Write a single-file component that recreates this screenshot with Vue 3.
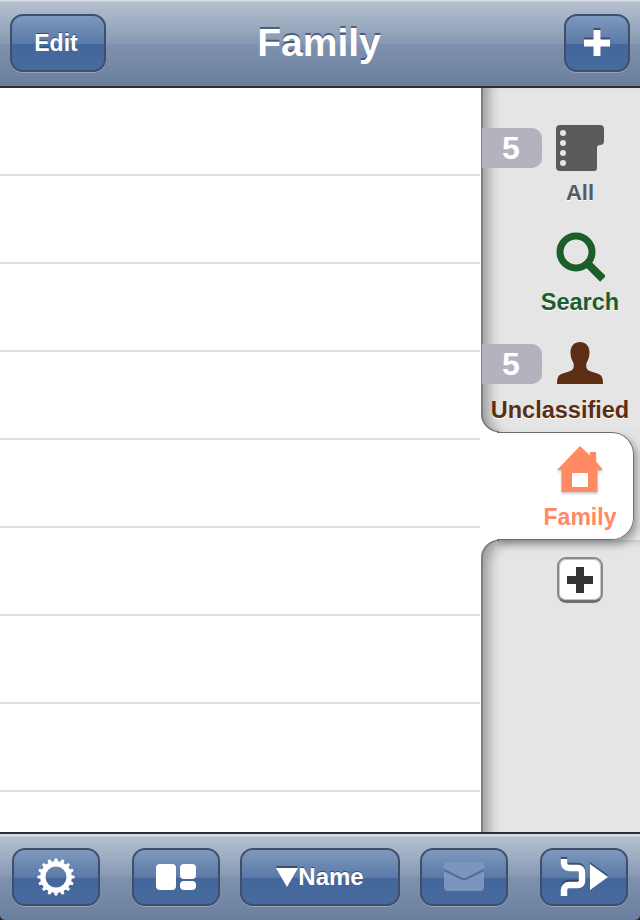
<script setup>
// gear outline for the settings button, hole cut with evenodd
const gearPath = (() => {
  const teeth = 16
  const cx = 20
  const cy = 20
  const step = (Math.PI * 2) / teeth
  let d = ''
  for (let i = 0; i < teeth; i++) {
    const a = i * step
    const pts = [
      [15.8, a - step * 0.5],
      [15.8, a - step * 0.3],
      [18.6, a - step * 0.18],
      [18.6, a + step * 0.18],
      [15.8, a + step * 0.3]
    ]
    for (const [r, t] of pts) {
      const x = (cx + r * Math.cos(t)).toFixed(2)
      const y = (cy + r * Math.sin(t)).toFixed(2)
      d += (d ? 'L' : 'M') + x + ' ' + y
    }
  }
  return d + 'Z M30.5 20a10.500 10.500 0 1 0-21 0a10.500 10.500 0 1 0 21 0Z'
})()

const rows = Array.from({ length: 9 }, (_, i) => i)
</script>

<template>
  <div class="screen">
    <header class="topbar">
      <button class="btn edit">Edit</button>
      <h1 class="title">Family</h1>
      <button class="btn add">
        <svg width="28" height="28" viewBox="0 0 28 28" class="raised">
          <path d="M10.500 1h7v9.500H27v7h-9.500V27h-7v-9.500H1v-7h9.500z" fill="#fff" />
        </svg>
      </button>
    </header>

    <main class="content">
      <div class="list">
        <div v-for="r in rows" :key="r" class="row"></div>
      </div>

      <aside class="sidebar">
        <div class="panel upper">
          <div class="item">
            <span class="badge">5</span>
            <svg class="icon" width="48" height="48" viewBox="0 0 48 48">
              <path d="M4 1h40a4 4 0 0 1 4 4v12a4 4 0 0 1-4 4 3 3 0 0 0-3 3v20a3 3 0 0 1-3 3H4a4 4 0 0 1-4-4V5a4 4 0 0 1 4-4z" fill="#5a5a5a" />
              <circle cx="7" cy="9" r="3" fill="#e5e5e5" />
              <circle cx="7" cy="19" r="3" fill="#e5e5e5" />
              <circle cx="7" cy="29" r="3" fill="#e5e5e5" />
              <circle cx="7" cy="39" r="3" fill="#e5e5e5" />
            </svg>
            <span class="label all">All</span>
          </div>
          <div class="item">
            <svg class="icon" width="50" height="50" viewBox="0 0 50 50">
              <circle cx="21" cy="20" r="16" fill="none" stroke="#1b5e2a" stroke-width="7" />
              <path d="M32 31l16 16" stroke="#1b5e2a" stroke-width="8" fill="none" />
            </svg>
            <span class="label search">Search</span>
          </div>
          <div class="item">
            <span class="badge">5</span>
            <svg class="icon" width="48" height="48" viewBox="0 0 48 48">
              <path d="M24 2c5.500 0 9.500 4 9.500 10.500 0 4-1 7-2.500 9.500-.8 1.500-1 4-.5 6 .5 2 3 3 6 4 3 1 7 2 8.500 3.500 1.500 1.500 2 5 2 8.500H1c0-3.500.5-7 2-8.500 1.500-1.500 5.500-2.500 8.500-3.500s5.500-2 6-4c.5-2 .3-4.500-.5-6-1.500-2.500-2.500-5.500-2.500-9.500C14.500 6 18.500 2 24 2z" fill="#5c2e14" />
            </svg>
            <span class="label unclassified">Unclassified</span>
          </div>
        </div>

        <div class="tab-row">
          <div class="tab">
            <svg class="icon" width="48" height="48" viewBox="0 0 48 48">
              <path d="M24 2l10 9.500V8h6v9.300L47 26h-5.500v23h-36V26H1z" fill="#ff8a63" />
              <rect x="16" y="29" width="16" height="14" fill="#fff" />
            </svg>
            <span class="label family">Family</span>
          </div>
        </div>

        <div class="panel lower">
          <button class="small-add">
            <svg width="26" height="26" viewBox="0 0 26 26">
              <path d="M9 0h8v9h9v8h-9v9H9v-9H0V9h9z" fill="#333" />
            </svg>
          </button>
        </div>
      </aside>
    </main>

    <footer class="toolbar">
      <button class="btn tool gear">
        <svg width="40" height="40" viewBox="0 0 40 40">
          <path :d="gearPath" fill="#fff" fill-rule="evenodd" />
        </svg>
      </button>
      <button class="btn tool">
        <svg width="40" height="26" viewBox="0 0 40 26">
          <rect width="20" height="26" rx="4" fill="#fff" />
          <rect x="24" width="16" height="15" rx="4" fill="#fff" />
          <rect x="24" y="17" width="16" height="9" rx="4" fill="#fff" />
        </svg>
      </button>
      <button class="btn tool sort">
        <svg width="22" height="19" viewBox="0 0 22 19" class="raised">
          <path d="M0 0h22L11 19z" fill="#fff" />
        </svg>
        <span>Name</span>
      </button>
      <button class="btn tool">
        <svg width="40" height="30" viewBox="0 0 40 30">
          <rect width="40" height="29" rx="4" fill="#7b95bd" />
          <path d="M0 8l17 8.500q3 1.200 6 0L40 8" fill="none" stroke="#4f6f9f" stroke-width="2" />
        </svg>
      </button>
      <button class="btn tool route">
        <svg width="50" height="38" viewBox="0 0 50 38" class="raised">
          <path d="M5 1v4a5 5 0 0 0 5 5h9a4 4 0 0 1 4 4v9a4 4 0 0 1-4 4h-9a5 5 0 0 0-5 5v6" fill="none" stroke="#fff" stroke-width="6.500" />
          <path d="M31 6l18 13-18 13z" fill="#fff" />
        </svg>
      </button>
    </footer>
  </div>
</template>

<style scoped>
.screen {
  width: 640px;
  height: 920px;
  display: flex;
  flex-direction: column;
  overflow: hidden;
  background: #26282b;
  font-family: "Liberation Sans", Arial, sans-serif;
}

.topbar {
  height: 86px;
  flex: none;
  display: flex;
  align-items: center;
  justify-content: space-between;
  padding: 0 10px;
  box-sizing: content-box;
  position: relative;
  border-bottom: 2px solid #2d3033;
  background: linear-gradient(#d6dbe1 0, #d6dbe1 1px, #b5c1d0 2px, #8698b3 44px, #7e92af 44px, #6a7f9e 86px);
}

.title {
  margin: 0;
  position: absolute;
  left: 0;
  right: 2px;
  text-align: center;
  font-size: 39px;
  font-weight: 700;
  color: #fff;
  text-shadow: 0 -2px 0 rgba(50, 62, 84, 0.7);
}

.btn {
  height: 58px;
  box-sizing: border-box;
  padding: 0;
  border: 2px solid #3f4f68;
  border-radius: 13px;
  background: linear-gradient(#7e99bf 0, #5a79a6 28px, #43669b 28px, #476b9f 100%);
  box-shadow: 0 1px 0 rgba(255, 255, 255, 0.25);
  color: #fff;
  font-family: inherit;
  font-weight: 700;
  font-size: 24px;
  display: flex;
  align-items: center;
  justify-content: center;
  text-shadow: 0 -1px 0 rgba(40, 55, 85, 0.7);
}

.edit {
  width: 96px;
  font-size: 23px;
  padding-right: 4px;
}

.add {
  width: 66px;
}

.raised {
  filter: drop-shadow(0 -2px 0 rgba(40, 55, 85, 0.7));
}

.content {
  flex: 1;
  min-height: 0;
  display: flex;
  background: #fff;
}

.list {
  width: 480px;
  flex: none;
  overflow: hidden;
}

.row {
  height: 88px;
  box-sizing: border-box;
  border-bottom: 2px solid #dfe0df;
}

.sidebar {
  flex: 1;
  display: flex;
  flex-direction: column;
  overflow: hidden;
  background: #fff;
}

.panel {
  margin-left: 1px;
  background: #e5e5e5;
  box-shadow: inset 16px 0 12px -8px rgba(0, 0, 0, 0.32);
  position: relative;
}

/* left edge with the corner that turns into the tab */
.panel::before {
  content: "";
  position: absolute;
  left: 0;
  top: 0;
  bottom: 0;
  width: 18px;
  box-sizing: border-box;
  border-left: 2px solid #808080;
  pointer-events: none;
}

.upper {
  padding-top: 20px;
  border-bottom-left-radius: 18px;
}

.upper::before {
  border-bottom: 1px solid #6f6f6f;
  border-bottom-left-radius: 18px;
}

.item {
  height: 108px;
  padding-left: 39px;
  position: relative;
  display: flex;
  flex-direction: column;
  align-items: center;
}

.item .icon {
  margin-top: 16px;
}

.badge {
  position: absolute;
  left: 1px;
  top: 20px;
  width: 60px;
  height: 40px;
  border-radius: 0 10px 10px 0;
  background: #b3b3c0;
  color: #fff;
  font-size: 32px;
  font-weight: 700;
  line-height: 40px;
  text-align: center;
  box-sizing: border-box;
  padding-right: 2px;
}

.label {
  font-size: 23.5px;
  font-weight: 700;
  line-height: 28px;
  white-space: nowrap;
  text-shadow: 0 1px 0 #fff;
}

.all {
  color: #5a5a5a;
  margin-top: 7px;
  font-size: 22px;
}

.search {
  color: #1b5e2a;
  margin-top: 6px;
}

.unclassified {
  color: #5c2e14;
  margin-top: 8px;
  margin-left: -40px;
}

.tab-row {
  height: 108px;
  flex: none;
  background: #e5e5e5;
  position: relative;
  z-index: 1;
}

.tab {
  width: 154px;
  height: 108px;
  box-sizing: border-box;
  padding-left: 46px;
  background: #fff;
  border-radius: 0 22px 22px 0;
  position: relative;
  display: flex;
  flex-direction: column;
  align-items: center;
}

/* outline and shadow start where the panel corners end */
.tab::after {
  content: "";
  position: absolute;
  left: 17px;
  right: 0;
  top: 0;
  bottom: 0;
  border: 1px solid #6f6f6f;
  border-left: 0;
  border-radius: 0 22px 22px 0;
  box-shadow: 3px 4px 8px rgba(0, 0, 0, 0.35);
  clip-path: inset(0 -14px -14px 0);
  pointer-events: none;
}

.tab .icon {
  margin-top: 12px;
  filter: drop-shadow(0 2px 1px rgba(0, 0, 0, 0.2));
}

.family {
  color: #ff8a63;
  margin-top: 11px;
  font-size: 23px;
  text-shadow: none;
}

.lower {
  flex: 1;
  border-top-left-radius: 18px;
  display: flex;
  justify-content: center;
  padding-top: 17px;
  padding-left: 39px;
  box-shadow: inset 16px 6px 12px -8px rgba(0, 0, 0, 0.32);
}

.lower::before {
  border-top: 1px solid #6f6f6f;
  border-top-left-radius: 18px;
}

.small-add {
  width: 46px;
  height: 46px;
  padding: 0;
  box-sizing: border-box;
  background: #fff;
  border: 2px solid #8a8a8a;
  border-bottom: 3px solid #707070;
  border-radius: 9px;
  box-shadow: inset 0 0 0 1px #c4c4c4;
  display: flex;
  align-items: center;
  justify-content: center;
}

.toolbar {
  height: 86px;
  flex: none;
  box-sizing: content-box;
  border-top: 2px solid #2d3033;
  border-radius: 0 0 5px 5px;
  display: flex;
  align-items: center;
  gap: 20px;
  padding: 0 12px;
  background: linear-gradient(#d6dbe1 0, #d6dbe1 2px, #b5c1d0 3px, #8698b3 43px, #7e92af 43px, #6a7f9e 86px);
}

.tool {
  width: 88px;
  flex: none;
}

.gear {
  margin-right: 12px;
}

.sort {
  width: 160px;
}

.route {
  margin-left: 12px;
}
</style>

<style>
html,
body {
  margin: 0;
  background: #fff;
}
</style>
